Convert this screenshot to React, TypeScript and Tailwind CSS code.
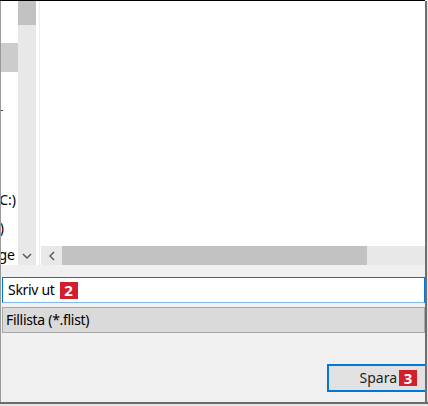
import React from "react";

function ChevronDown() {
  return (
    <svg width="10" height="6" viewBox="0 0 10 6" fill="none">
      <path d="M1 1 L5 5 L9 1" stroke="#555" strokeWidth="1.4" />
    </svg>
  );
}

function ChevronLeft() {
  return (
    <svg width="6" height="10" viewBox="0 0 6 10" fill="none">
      <path d="M5 1 L1 5 L5 9" stroke="#555" strokeWidth="1.4" />
    </svg>
  );
}

function Badge({ n, h }: { n: string; h: string }) {
  return (
    <span
      className={`inline-flex w-[18px] ${h} items-center justify-center bg-[#d21f2d] text-white font-bold text-[15px] leading-none`}
    >
      {n}
    </span>
  );
}

export default function App() {
  return (
    <div className="w-[428px] h-[406px] overflow-hidden bg-[#f0f0f0] flex flex-col font-['Noto_Sans',sans-serif] text-[14px] text-black">
      <div className="h-px bg-black mr-[3px]" />
      <div className="flex-1 flex flex-row min-h-0">
        <div className="w-px bg-[#9a9a9a]" />
        <div className="flex-1 flex flex-col min-w-0">
          {/* upper browser area */}
          <div className="h-[264px] flex flex-row">
            {/* nav column */}
            <div className="w-[17px] bg-white overflow-hidden flex flex-col pt-[42px]">
              <div className="h-[29px] bg-[#cccccc] shrink-0" />
              <div className="h-[27px] shrink-0" />
              <div className="h-[28px] shrink-0 flex items-center">
                <div className="w-[2px] h-px bg-[#444] -mt-[5px]" />
              </div>
              <div className="h-[28px] shrink-0" />
              <div className="h-[28px] shrink-0" />
              <div className="h-[28px] shrink-0 flex justify-end items-center pr-[2px] whitespace-nowrap pt-[4px]">
                Lokal disk (C:)
              </div>
              <div className="h-[28px] shrink-0 flex justify-end items-center pr-[14px] whitespace-nowrap pt-[4px]">
                Data (D:)
              </div>
              <div className="h-[28px] shrink-0 flex justify-end items-center pr-[3px] whitespace-nowrap pt-[2px]">
                Storage
              </div>
            </div>
            {/* vertical scrollbar */}
            <div className="w-[18px] bg-[#e8e8e8] flex flex-col">
              <div className="h-[24px] bg-[#c2c2c2]" />
              <div className="flex-1" />
              <div className="h-[18px] flex items-center justify-center">
                <ChevronDown />
              </div>
            </div>
            {/* splitter */}
            <div className="w-[3px] bg-white" />
            <div className="w-px bg-[#ececec]" />
            {/* list */}
            <div className="flex-1 flex flex-col bg-white min-w-0">
              <div className="flex-1" />
              <div className="h-[19px] flex flex-row bg-[#e8e8e8] ml-px">
                <div className="w-[21px] flex items-center justify-center">
                  <ChevronLeft />
                </div>
                <div className="w-[305px] bg-[#c2c2c2]" />
                <div className="flex-1" />
              </div>
            </div>
          </div>

          {/* filename input */}
          <div className="mt-[12px] ml-px h-[26px] bg-white border border-[#0078d7] border-b-[#7fb8e6] flex items-center pl-[5px] gap-[5px]">
            <span className="leading-none tracking-[-0.3px]">Skriv ut</span>
            <Badge n="2" h="h-[17px]" />
          </div>

          {/* file type select */}
          <div className="mt-[4px] ml-px h-[26px] bg-[#dadada] border border-[#a8a8a8] flex items-center pl-[3px]">
            <span className="leading-none tracking-[-0.3px]">Fillista (*.flist)</span>
          </div>

          {/* save button */}
          <div className="mt-[31px] ml-[326px] h-[28px] border-2 border-r-0 border-[#0078d7] bg-[#e1e1e1] flex items-center justify-end pr-[8px] gap-[2px]">
            <span className="leading-none text-[#222]">Spara</span>
            <Badge n="3" h="h-[16px]" />
          </div>
        </div>
        <div className="w-[2px] bg-[#6e6e6e]" />
        <div className="w-px bg-[#e4e4e4]" />
      </div>
      <div className="h-[2px] bg-[#6b6b6b]" />
      <div className="h-[2px] bg-[#e6e6e6]" />
    </div>
  );
}
